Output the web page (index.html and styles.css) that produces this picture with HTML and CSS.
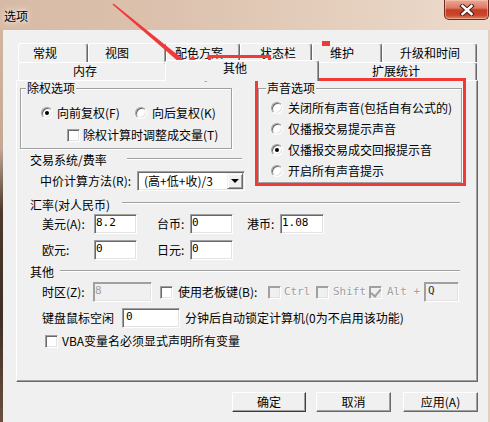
FILE: index.html
```html
<!DOCTYPE html>
<html lang="zh-CN">
<head>
  <meta charset="UTF-8" />
  <meta name="viewport" content="width=device-width, initial-scale=1.0"/>
  <title>选项</title>
  <link rel="stylesheet" href="styles.css">
</head>
<body>
  <div class="window">

    <!-- 标题栏 -->
    <div class="titlebar">
      <span class="title">选项</span>
      <div class="close-btn">
        <svg width="16" height="12" viewBox="0 0 16 12">
          <path d="M3.5 2 L12.5 10 M12.5 2 L3.5 10" stroke="#4a1c16" stroke-width="4.4" stroke-linecap="square"/>
          <path d="M3.5 2 L12.5 10 M12.5 2 L3.5 10" stroke="#fff" stroke-width="2.4" stroke-linecap="square"/>
        </svg>
      </div>
    </div>

    <div class="client">
      <!-- 标签页 -->
      <div class="tabs">
        <div class="tab-row">
          <div class="tab t-cg">常规</div>
          <div class="tab t-st">视图</div>
          <div class="tab t-ps">配色方案</div>
          <div class="tab t-zt">状态栏</div>
          <div class="tab t-wh">维护</div>
          <div class="tab t-sj">升级和时间</div>
        </div>
        <div class="tab-row front">
          <div class="tab t-nc">内存</div>
          <div class="tab t-qt active">其他</div>
          <div class="tab t-kz">扩展统计</div>
        </div>
      </div>

      <!-- 其他 页面 -->
      <div class="panel">
        <div class="top">
          <div class="col-left">
            <fieldset class="group g-fq">
              <legend>除权选项</legend>
              <div class="row r-fq">
                <span class="radio on"></span>
                <span class="lbl l-fq">向前复权(F)</span>
                <span class="radio r-second"></span>
                <span class="lbl l-hq">向后复权(K)</span>
              </div>
              <div class="row r-vol">
                <span class="check"></span>
                <span class="lbl l-chk">除权计算时调整成交量(T)</span>
              </div>
            </fieldset>

            <div class="sec sec-fee"><span>交易系统/费率</span><i class="sep"></i></div>
            <div class="row r-mid">
              <span class="lbl l-mid">中价计算方法(R):</span>
              <div class="combo">
                <span class="combo-text">(高+低+收)/3</span>
                <span class="combo-btn"></span>
              </div>
            </div>
          </div>

          <fieldset class="group g-sound">
            <legend>声音选项</legend>
            <div class="opt"><span class="radio"></span>关闭所有声音(包括自有公式的)</div>
            <div class="opt"><span class="radio"></span>仅播报交易提示声音</div>
            <div class="opt"><span class="radio on"></span>仅播报交易成交回报提示音</div>
            <div class="opt"><span class="radio"></span>开启所有声音提示</div>
          </fieldset>
        </div>

        <div class="sec sec-rate"><span>汇率(对人民币)</span><i class="sep"></i></div>
        <div class="field-row fr-first">
          <span class="lbl l-cur">美元(A):</span>
          <input class="edit e-cur" value="8.2">
          <span class="lbl l-cur2">台币:</span>
          <input class="edit e-cur" value="0">
          <span class="lbl l-cur3">港币:</span>
          <input class="edit e-hk" value="1.08">
        </div>
        <div class="field-row">
          <span class="lbl l-cur">欧元:</span>
          <input class="edit e-cur" value="0">
          <span class="lbl l-cur2">日元:</span>
          <input class="edit e-cur" value="0">
        </div>

        <div class="sec sec-other"><span>其他</span><i class="sep"></i></div>
        <div class="field-row fr-tz">
          <span class="lbl l-tz">时区(Z):</span>
          <input class="edit e-tz" value="8" disabled>
          <span class="check c-boss"></span>
          <span class="lbl l-boss">使用老板键(B):</span>
          <span class="check off"></span>
          <span class="dis d-ctrl">Ctrl</span>
          <span class="check off"></span>
          <span class="dis d-shift">Shift</span>
          <span class="check off ticked"></span>
          <span class="dis d-alt">Alt +</span>
          <input class="edit e-key" value="Q" readonly>
        </div>
        <div class="field-row">
          <span class="lbl l-idle">键盘鼠标空闲</span>
          <input class="edit e-idle" value="0">
          <span class="lbl l-lock">分钟后自动锁定计算机(0为不启用该功能)</span>
        </div>
        <div class="row r-vba">
          <span class="check"></span>
          <span class="lbl l-vba">VBA变量名必须显式声明所有变量</span>
        </div>
      </div>

      <!-- 按钮 -->
      <div class="buttons">
        <button class="btn b-ok">确定</button>
        <button class="btn b-cancel">取消</button>
        <button class="btn">应用(A)</button>
      </div>
    </div>

    <!-- 红色标注 -->
    <svg class="marks" width="490" height="422" viewBox="0 0 490 422">
      <rect x="322" y="41" width="8" height="5" fill="#f03a3a"/>
      <rect x="209.5" y="56.5" width="60" height="23" fill="none" stroke="#f03a3a" stroke-width="3"/>
      <rect x="256.5" y="79.5" width="208" height="105" fill="none" stroke="#f03a3a" stroke-width="3"/>
      <polygon points="112.5,4.5 113.5,3.5 188.5,63.5 185.3,67.4" fill="#f03a3a"/>
      <polygon points="207,82 177.7,73.3 193.1,54.9" fill="#f03a3a"/>
    </svg>
  </div>
</body>
</html>
```

FILE: styles.css
```css
* {
  box-sizing: border-box;
}

body {
  margin: 0;
  font: 12px/14px "Noto Sans CJK SC", sans-serif;
  color: #000;
  background: #f0f0f0;
}

.window {
  position: relative;
  width: 490px;
  height: 422px;
  overflow: hidden;
  display: flex;
  flex-direction: column;
  background: linear-gradient(#d3b9a5 0%, #c4a895 35%, #4d392c 50%, #3e2e24 75%, #6a5040 100%);
}

/* 标题栏 */
.titlebar {
  height: 30px;
  flex-shrink: 0;
  display: flex;
  align-items: flex-start;
  background: linear-gradient(90deg, #d7baa5 0%, #dcc2ae 35%, #e4cdbb 65%, #ecdbcc 100%);
}

.title {
  margin: 9px 0 0 4px;
  text-shadow: 0 0 4px #fff, 0 0 8px #f6eee6;
}

.close-btn {
  margin-left: auto;
  margin-right: 1px;
  width: 45px;
  height: 20px;
  display: flex;
  align-items: center;
  justify-content: center;
  border: 1px solid #6e2a20;
  border-top: none;
  border-radius: 0 0 5px 5px;
  background: linear-gradient(#e9a898 0%, #dd7a64 42%, #c53d25 52%, #c9462c 80%, #e0886a 100%);
  box-shadow: inset 0 0 0 1px rgba(255, 210, 190, 0.5);
}

.client {
  flex: 1;
  margin-left: 3px;
  border-right: 2px solid #e2cfbf;
  background: #f0f0f0;
  padding: 13px 0 0 13px;
}

/* 标签页 */
.tabs {
  margin-left: 2px;
}

.tab-row {
  display: flex;
}

.tab {
  flex-shrink: 0;
  height: 19px;
  line-height: 17px;
  white-space: nowrap;
  background: #f0f0f0;
  border: 1px solid;
  border-color: #fff #696969 transparent #fff;
  border-bottom: none;
  border-radius: 3px 3px 0 0;
  box-shadow: inset -1px 0 0 #a0a0a0;
}

.tab-row.front .tab {
  height: 18px;
  line-height: 16px;
}

.tab-row.front .tab.active {
  position: relative;
  z-index: 2;
  height: 21px;
  line-height: 14px;
  margin: -2px -2px -1px;
}

.t-cg { width: 70px; text-indent: 14px; }
.t-st { width: 78px; text-indent: 16px; }
.t-ps { width: 74px; text-indent: 8px; }
.t-zt { width: 72px; text-indent: 19px; }
.t-wh { width: 70px; text-indent: 17px; }
.t-sj { width: 95px; text-indent: 17px; }
.t-nc { width: 149px; text-indent: 54px; }
.t-qt { width: 154px; text-indent: 57px; }
.t-kz { width: 160px; text-indent: 54px; }

.panel {
  width: 462px;
  height: 302px;
  border: 1px solid;
  border-color: #fff #696969 #696969 #fff;
  box-shadow: inset -1px -1px 0 #a0a0a0;
  padding-left: 3px;
}

.top {
  display: flex;
  align-items: flex-start;
}

.col-left {
  width: 225px;
}

/* 分组框 */
.group {
  margin: 0;
  padding: 0;
  min-width: 0;
  border: 1px solid #a0a0a0;
  box-shadow: inset 1px 1px 0 #fff, 1px 1px 0 #fff;
}

.group legend {
  padding: 0 1px;
  line-height: 14px;
  background: #f0f0f0;
}

.g-fq {
  width: 212px;
  padding-bottom: 5px;
}

.g-fq legend {
  margin-left: 5px;
}

.g-sound {
  width: 204px;
  margin-left: 13px;
  padding: 2px 0 1px;
}

.g-sound legend {
  margin-left: 7px;
}

.opt {
  height: 21px;
  display: flex;
  align-items: center;
  padding-left: 12px;
  white-space: nowrap;
}

.opt .radio {
  margin-right: 5px;
}

.row {
  display: flex;
  align-items: center;
  height: 16px;
}

.lbl {
  flex-shrink: 0;
  white-space: nowrap;
}

.r-fq {
  margin-top: 10px;
  padding-left: 20px;
}

.l-fq {
  width: 66px;
  margin-left: 4px;
}

.r-second {
  margin-left: 12px;
}

.l-hq {
  margin-left: 5px;
}

.r-vol {
  margin-top: 6px;
  padding-left: 46px;
}

.l-chk {
  margin-left: 3px;
}

/* 单选 / 复选 */
.radio {
  position: relative;
  flex-shrink: 0;
  width: 12px;
  height: 12px;
  border-radius: 50%;
  background: #fff;
  border: 1px solid;
  border-color: #a0a0a0 #fff #fff #a0a0a0;
  box-shadow: inset 1px 1px 0 #696969, inset -1px -1px 0 #e3e3e3;
}

.radio.on::after {
  content: "";
  position: absolute;
  left: 3px;
  top: 3px;
  width: 4px;
  height: 4px;
  border-radius: 50%;
  background: #000;
}

.check {
  position: relative;
  flex-shrink: 0;
  width: 13px;
  height: 13px;
  background: #fff;
  border: 1px solid;
  border-color: #a0a0a0 #fff #fff #a0a0a0;
  box-shadow: inset 1px 1px 0 #696969, inset -1px -1px 0 #e3e3e3;
}

.check.off {
  background: #f0f0f0;
  box-shadow: inset 1px 1px 0 #a0a0a0, inset -1px -1px 0 #e3e3e3;
}

.check.ticked::after {
  content: "";
  position: absolute;
  left: 3px;
  top: 0;
  width: 4px;
  height: 8px;
  border: solid #a0a0a0;
  border-width: 0 2px 2px 0;
  transform: rotate(40deg);
}

/* 分隔标题 */
.sec {
  display: flex;
  align-items: flex-start;
  height: 14px;
  padding-left: 10px;
  white-space: nowrap;
}

.sep {
  flex: 1;
  height: 2px;
  border-top: 1px solid #a0a0a0;
  border-bottom: 1px solid #fff;
}

.sec-fee {
  margin-top: 4px;
}

.sec-fee .sep {
  margin: 5px 3px 0 20px;
}

.sec-rate {
  margin-top: 7px;
}

.sec-rate .sep {
  margin: 4px 17px 0 12px;
}

.sec-other {
  margin-top: 5px;
}

.sec-other .sep {
  margin: 5px 17px 0 6px;
}

.r-mid {
  height: 20px;
  margin-top: 4px;
  padding-left: 20px;
}

.l-mid {
  width: 97px;
}

.combo {
  width: 108px;
  height: 20px;
  display: flex;
  align-items: center;
  background: #fff;
  border: 1px solid;
  border-color: #a0a0a0 #fff #fff #a0a0a0;
  box-shadow: inset 1px 1px 0 #696969, inset -1px -1px 0 #e3e3e3;
  padding: 1px 1px 1px 6px;
}

.combo-text {
  white-space: nowrap;
}

.combo-btn {
  position: relative;
  margin-left: auto;
  width: 16px;
  height: 16px;
  background: #f0f0f0;
  border: 1px solid;
  border-color: #f0f0f0 #696969 #696969 #f0f0f0;
  box-shadow: inset 1px 1px 0 #fff, inset -1px -1px 0 #a0a0a0;
}

.combo-btn::after {
  content: "";
  position: absolute;
  left: 3px;
  top: 5px;
  border-left: 4px solid transparent;
  border-right: 4px solid transparent;
  border-top: 4px solid #000;
}

/* 输入行 */
.field-row {
  display: flex;
  align-items: center;
  height: 20px;
  margin-top: 6px;
  padding-left: 22px;
}

.fr-first {
  margin-top: 2px;
}

.fr-tz {
  margin-top: 3px;
}

.edit {
  flex-shrink: 0;
  height: 20px;
  margin: 0;
  padding: 0 0 3px 1px;
  font: 11px "DejaVu Sans Mono", monospace;
  color: #000;
  background: #fff;
  border: 1px solid;
  border-color: #a0a0a0 #fff #fff #a0a0a0;
  box-shadow: inset 1px 1px 0 #696969, inset -1px -1px 0 #e3e3e3;
  outline: none;
}

.edit:disabled,
.edit[readonly] {
  background: #f0f0f0;
  box-shadow: inset 1px 1px 0 #a0a0a0, inset -1px -1px 0 #e3e3e3;
}

.edit:disabled {
  color: #a0a0a0;
}

.edit[readonly] {
  color: #333;
}

.l-cur { width: 52px; }
.l-cur2 { width: 33px; margin-left: 20px; }
.l-cur3 { width: 33px; margin-left: 14px; }
.e-cur { width: 43px; }
.e-hk { width: 44px; }

.l-tz { width: 51px; }
.e-tz { width: 59px; }
.c-boss { margin-left: 8px; }
.l-boss { width: 90px; margin-left: 5px; }

.dis {
  flex-shrink: 0;
  white-space: pre;
  font: 11px/14px "DejaVu Sans Mono", monospace;
  color: #a0a0a0;
  text-shadow: 1px 1px 0 #fff;
}

.d-ctrl { width: 32px; margin-left: 3px; }
.d-shift { width: 36px; margin-left: 4px; }
.d-alt { width: 37px; margin-left: 5px; }
.e-key { width: 35px; padding-left: 3px; }

.l-idle { width: 80px; }
.e-idle { width: 58px; padding-left: 3px; }
.l-lock { margin-left: 5px; }

.r-vba {
  height: 14px;
  margin-top: 6px;
  padding-left: 25px;
}

.l-vba {
  margin-left: 4px;
}

/* 按钮 */
.buttons {
  display: flex;
  justify-content: flex-end;
  margin-top: 10px;
  padding-right: 10px;
}

.btn {
  width: 75px;
  height: 20px;
  padding: 0;
  font: inherit;
  color: #000;
  background: #f0f0f0;
  border: 1px solid;
  border-color: #fff #696969 #696969 #fff;
  box-shadow: inset -1px -1px 0 #a0a0a0;
}

.b-ok {
  width: 74px;
  margin-right: 10px;
  border-color: #fff #3c3c3c #3c3c3c #fff;
}

.b-cancel {
  margin-right: 12px;
}

/* 红色标注 */
.marks {
  position: absolute;
  top: 0;
  left: 0;
  pointer-events: none;
}
```
